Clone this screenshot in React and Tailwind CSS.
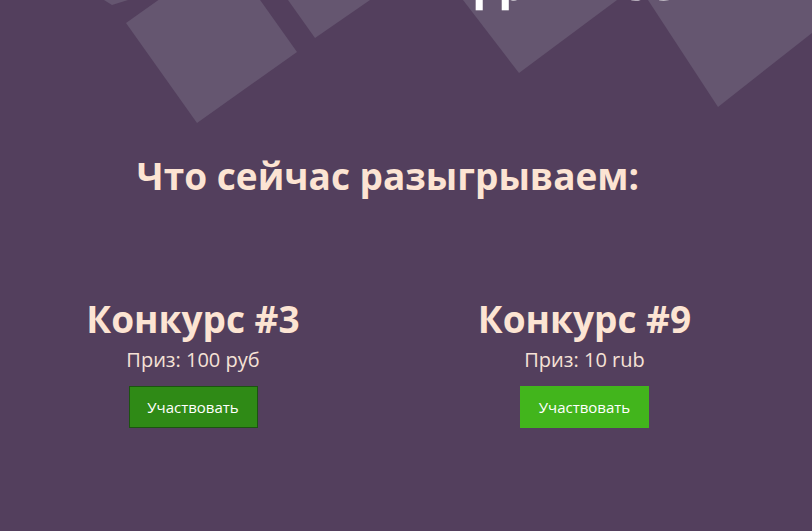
import React from "react";

const contests = [
  { title: "Конкурс #3", prize: "Приз: 100 руб", btn: "bg-[#2f8a16] border border-[#1b5410]" },
  { title: "Конкурс #9", prize: "Приз: 10 rub", btn: "bg-[#42b51c]" },
];

const Shapes = () => (
  <svg
    className="absolute top-0 left-0"
    width="812"
    height="140"
    viewBox="0 0 812 140"
    fill="#655670"
  >
    <polygon points="104,0 128,0 112,5" />
    <polygon points="126,23 226,-48 297,52 197,123" />
    <polygon points="288,0 315,38 370,0" />
    <polygon points="463,0 519,73 617,0" />
    <polygon points="648,0 718,107 812,33 812,0" />
  </svg>
);

export default function App() {
  return (
    <div
      className="relative min-h-screen overflow-hidden bg-[#533f5d]"
      style={{ fontFamily: '"Open Sans", "Noto Sans", sans-serif' }}
    >
      <Shapes />

      <div className="relative">
        {/* hero title, mostly scrolled away */}
        <div className="-mt-[46px] pl-[475px] text-[52px] font-bold leading-none text-white">
          для всех
        </div>

        <h2 className="mt-[151px] w-[776px] text-center text-[37px] font-bold leading-none text-[#fce4d3]">
          Что сейчас разыгрываем:
        </h2>

        <div className="mt-[106px] grid grid-cols-[386px_397px]">
          {contests.map((c) => (
            <div key={c.title} className="flex flex-col items-center">
              <h3 className="text-[37px] font-bold leading-none text-[#fce4d3]">
                {c.title}
              </h3>
              <p className="mt-[13px] text-[20px] leading-none text-[#f6e2d6]">
                {c.prize}
              </p>
              <button
                className={`mt-[16px] h-[42px] w-[129px] text-[15px] text-white ${c.btn}`}
              >
                Участвовать
              </button>
            </div>
          ))}
        </div>
      </div>
    </div>
  );
}
